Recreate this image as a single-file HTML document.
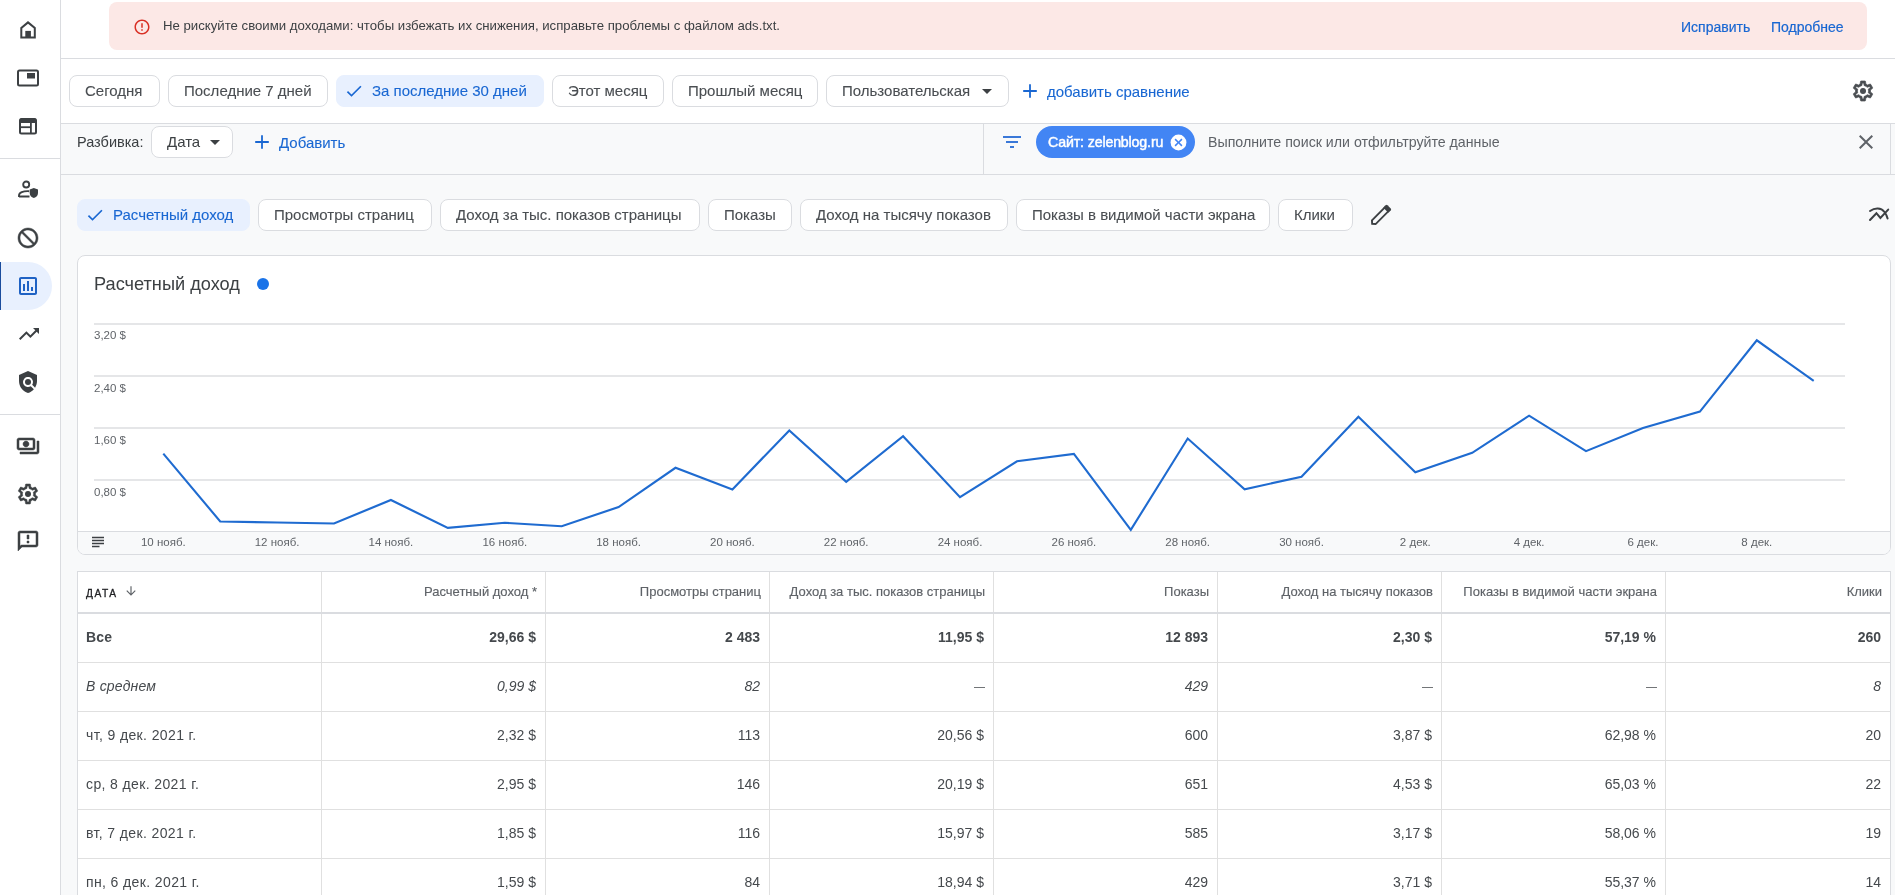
<!DOCTYPE html>
<html><head><meta charset="utf-8">
<style>
*{box-sizing:border-box;margin:0;padding:0}
html,body{width:1895px;height:895px;overflow:hidden;background:#f8f9fa;-webkit-font-smoothing:antialiased;font-family:"Liberation Sans",sans-serif;color:#3c4043}
.a{position:absolute}
.t{position:absolute;white-space:nowrap;height:20px;line-height:20px}
svg{position:absolute;display:block;overflow:visible}
.chip{position:absolute;height:32px;border:1px solid #dadce0;border-radius:8px;background:#fff}
.ct{position:absolute;white-space:nowrap;font-size:15px;color:#4a4e52;height:20px;line-height:20px;-webkit-text-stroke:0.1px currentColor}
.sel{background:#e8f0fe;border-color:#e8f0fe}
.blue{color:#1967d2}
.ic path{fill:#3c4043}
.th{position:absolute;white-space:nowrap;font-size:13px;color:#5f6368;height:20px;line-height:20px;-webkit-text-stroke:0.15px currentColor}
.td{position:absolute;white-space:nowrap;font-size:14px;color:#45494d;height:20px;line-height:20px}
.r{text-align:right}
</style></head><body><div id="root" style="position:absolute;left:0;top:0;width:1895px;height:895px;overflow:hidden;will-change:transform">
<!-- sidebar -->
<div class="a" style="left:0;top:0;width:61px;height:895px;background:#fff;border-right:1px solid #dadce0"></div>
<div class="a" style="left:0;top:158px;width:60px;height:1px;background:#dadce0"></div>
<div class="a" style="left:0;top:414px;width:60px;height:1px;background:#dadce0"></div>
<div class="a" style="left:0;top:262px;width:52px;height:48px;background:#e8f0fe;border-radius:0 24px 24px 0"></div>
<div class="a" style="left:0;top:262px;width:1px;height:48px;background:#1a4c9e"></div>

<!-- home -->
<svg style="left:16px;top:18px" width="24" height="24" viewBox="0 0 24 24"><path d="M12 4.4 L18.8 9.9 V19.6 H5.3 V9.9 Z" fill="none" stroke="#3c4043" stroke-width="2" stroke-linejoin="miter"/><rect x="9.3" y="12.9" width="5.6" height="7" fill="#3c4043"/></svg>
<!-- ads -->
<svg style="left:16px;top:66px" width="24" height="24" viewBox="0 0 24 24"><rect x="2" y="4.5" width="20" height="15" rx="1.5" fill="none" stroke="#3c4043" stroke-width="2"/><rect x="11" y="7" width="8" height="5.5" fill="#3c4043"/></svg>
<!-- sites -->
<svg style="left:16px;top:114px" width="24" height="24" viewBox="0 0 24 24"><rect x="4" y="5" width="16" height="14.5" rx="1.5" fill="none" stroke="#3c4043" stroke-width="2"/><rect x="4" y="4.5" width="16" height="4.5" rx="1" fill="#3c4043"/><rect x="4" y="12.3" width="11" height="1.8" fill="#3c4043"/><rect x="14" y="9" width="1.8" height="10" fill="#3c4043"/></svg>
<!-- person shield -->
<svg style="left:16px;top:178px" width="24" height="24" viewBox="0 0 24 24"><circle cx="10.2" cy="6.5" r="3" fill="none" stroke="#3c4043" stroke-width="1.9"/><path d="M3 19 V17.6 C3 14.5 7 12.9 13.2 13.2" fill="none" stroke="#3c4043" stroke-width="1.9"/><path d="M3 18.5 H13.5" stroke="#3c4043" stroke-width="2"/><path d="M17.8 10 L22 11.6 V15 C22 17.5 20.3 19.4 17.8 20 C15.3 19.4 13.7 17.5 13.7 15 V11.6 Z" fill="#3c4043"/></svg>
<!-- block -->
<svg style="left:16px;top:226px" width="24" height="24" viewBox="0 0 24 24"><path transform="translate(24,0) scale(-1,1)" fill="#3c4043" stroke="#3c4043" stroke-width="0.5" d="M12 2C6.48 2 2 6.48 2 12s4.48 10 10 10 10-4.48 10-10S17.52 2 12 2zM4 12c0-4.42 3.58-8 8-8 1.85 0 3.55.63 4.9 1.69L5.69 16.9C4.63 15.55 4 13.85 4 12zm8 8c-1.85 0-3.55-.63-4.9-1.69L18.31 7.1C19.37 8.45 20 10.15 20 12c0 4.42-3.58 8-8 8z"/></svg>
<!-- report -->
<svg style="left:16px;top:274px" width="24" height="24" viewBox="0 0 24 24"><path fill="#1f62c4" d="M9 17H7v-7h2v7zm4 0h-2V7h2v10zm4 0h-2v-4h2v4zm2 2H5V5h14v14.1V19zm0-16H5c-1.1 0-2 .9-2 2v14c0 1.1.9 2 2 2h14c1.1 0 2-.9 2-2V5c0-1.1-.9-2-2-2z"/></svg>
<!-- trending -->
<svg style="left:16.5px;top:322px" width="24" height="24" viewBox="0 0 24 24"><path fill="#3c4043" d="M16 6l2.29 2.29-4.88 4.88-4-4L2 16.59 3.41 18l6-6 4 4 6.3-6.29L22 12V6z"/></svg>
<!-- policy -->
<svg style="left:16px;top:370px" width="24" height="24" viewBox="0 0 24 24"><path fill="#3c4043" d="M21 5l-9-4-9 4v6c0 5.55 3.84 10.74 9 12 2.3-.56 4.33-1.9 5.88-3.71l-3.12-3.12c-1.94 1.29-4.58 1.07-6.29-.64-1.95-1.95-1.95-5.120 0-7.07 1.95-1.95 5.12-1.95 7.07 0 1.71 1.71 1.92 4.35.64 6.29l2.9 2.9C20.29 15.69 21 13.38 21 11V5z"/><circle cx="12" cy="12" r="3" fill="#3c4043"/></svg>
<!-- payments -->
<svg style="left:16px;top:434px" width="24" height="24" viewBox="0 0 24 24"><path fill="#3c4043" stroke="#3c4043" stroke-width="0.5" d="M19 14V6c0-1.1-.9-2-2-2H3c-1.1 0-2 .9-2 2v8c0 1.1.9 2 2 2h14c1.1 0 2-.9 2-2zm-2 0H3V6h14v8zm-7-7c-1.66 0-3 1.34-3 3s1.34 3 3 3 3-1.34 3-3-1.34-3-3-3zm13 0v11c0 1.1-.9 2-2 2H4v-2h17V7h2z"/></svg>
<!-- settings -->
<svg style="left:16px;top:482px" width="24" height="24" viewBox="0 0 24 24"><path fill="#3c4043" stroke="#3c4043" stroke-width="0.5" d="M19.43 12.98c.04-.32.07-.64.07-.98 0-.34-.03-.66-.07-.98l2.11-1.650c.19-.15.24-.42.12-.64l-2-3.46c-.09-.16-.26-.25-.44-.25-.06 0-.12.01-.17.03l-2.49 1c-.52-.4-1.08-.73-1.69-.98l-.38-2.65C14.46 2.18 14.25 2 14 2h-4c-.25 0-.46.18-.49.42l-.38 2.65c-.61.25-1.17.59-1.69.98l-2.49-1c-.06-.02-.12-.03-.18-.03-.17 0-.34.09-.43.25l-2 3.46c-.13.22-.07.49.12.64l2.11 1.65c-.04.32-.07.65-.07.98 0 .33.03.66.07.98l-2.11 1.65c-.19.15-.24.42-.12.64l2 3.46c.09.16.26.25.44.25.06 0 .12-.01.17-.03l2.49-1c.52.4 1.080.73 1.69.98l.38 2.65c.03.24.24.42.49.42h4c.25 0 .46-.18.49-.42l.38-2.65c.61-.25 1.17-.59 1.69-.98l2.49 1c.06.02.12.03.18.03.17 0 .34-.09.43-.25l2-3.46c.12-.22.07-.49-.12-.64l-2.11-1.65zm-1.98-1.71c.04.31.05.52.05.73 0 .21-.02.43-.05.73l-.14 1.13.89.7 1.08.84-.7 1.21-1.27-.51-1.04-.42-.9.68c-.43.32-.84.56-1.25.73l-1.06.43-.16 1.13-.2 1.35h-1.4l-.19-1.35-.16-1.13-1.06-.43c-.43-.18-.83-.41-1.23-.71l-.91-.7-1.06.43-1.27.51-.7-1.21 1.08-.84.89-.7-.14-1.13c-.03-.31-.05-.54-.05-.74s.02-.43.05-.73l.14-1.13-.89-.7-1.08-.84.7-1.21 1.27.51 1.04.42.9-.68c.43-.32.84-.56 1.25-.73l1.06-.43.16-1.13.2-1.35h1.39l.19 1.35.16 1.13 1.06.43c.43.18.83.41 1.23.71l.91.7 1.06-.43 1.27-.51.7 1.21-1.07.85-.89.7.14 1.13z"/><circle cx="12" cy="12" r="3" fill="#3c4043"/></svg>
<!-- feedback -->
<svg style="left:16px;top:529px" width="24" height="24" viewBox="0 0 24 24"><path fill="#3c4043" stroke="#3c4043" stroke-width="0.5" d="M20 2H4c-1.1 0-1.99.9-1.99 2L2 22l4-4h14c1.1 0 2-.9 2-2V4c0-1.1-.9-2-2-2zm0 14H5.17l-.59.59-.58.58V4h16v12zm-9-4h2v2h-2zm0-6h2v4h-2z"/></svg>

<!-- top white area -->
<div class="a" style="left:61px;top:0;width:1834px;height:123px;background:#fff"></div>
<div class="a" style="left:61px;top:58px;width:1834px;height:1px;background:#dadce0"></div>
<div class="a" style="left:61px;top:123px;width:1834px;height:1px;background:#dadce0"></div>
<div class="a" style="left:61px;top:174px;width:1834px;height:1px;background:#dadce0"></div>

<!-- banner -->
<div class="a" style="left:109px;top:2px;width:1758px;height:48px;background:#fce8e6;border-radius:8px"></div>
<svg style="left:133px;top:18px" width="18" height="18" viewBox="0 0 24 24"><path fill="#d93025" d="M11 15h2v2h-2zm0-8h2v6h-2zm.99-5C6.47 2 2 6.48 2 12s4.47 10 10 10 10-4.48 10-10S17.52 2 11.99 2zM12 20c-4.42 0-8-3.58-8-8s3.58-8 8-8 8 3.58 8 8-3.58 8-8 8z"/></svg>
<div class="t" style="left:163px;top:16px;font-size:13.2px;color:#3c4043">Не рискуйте своими доходами: чтобы избежать их снижения, исправьте проблемы с файлом ads.txt.</div>
<div class="t blue" style="left:1681px;top:17px;font-size:14px;-webkit-text-stroke:0.2px #1967d2">Исправить</div>
<div class="t blue" style="left:1771px;top:17px;font-size:14px;-webkit-text-stroke:0.2px #1967d2">Подробнее</div>

<!-- date chips -->
<div class="chip" style="left:69px;top:75px;width:91px"></div>
<div class="ct" style="left:85px;top:80.5px">Сегодня</div>
<div class="chip" style="left:168px;top:75px;width:160px"></div>
<div class="ct" style="left:184px;top:80.5px">Последние 7 дней</div>
<div class="chip sel" style="left:336px;top:75px;width:208px"></div>
<svg style="left:344px;top:81px" width="20" height="20" viewBox="0 0 24 24"><path fill="#1967d2" d="M9 16.17L4.83 12l-1.42 1.41L9 19 21 7l-1.41-1.41z"/></svg>
<div class="ct blue" style="left:372px;top:80.5px">За последние 30 дней</div>
<div class="chip" style="left:552px;top:75px;width:112px"></div>
<div class="ct" style="left:568px;top:80.5px">Этот месяц</div>
<div class="chip" style="left:672px;top:75px;width:146px"></div>
<div class="ct" style="left:688px;top:80.5px">Прошлый месяц</div>
<div class="chip" style="left:826px;top:75px;width:183px"></div>
<div class="ct" style="left:842px;top:80.5px">Пользовательская</div>
<svg style="left:975px;top:79px" width="24" height="24" viewBox="0 0 24 24"><path fill="#3c4043" d="M7 10l5 5 5-5z"/></svg>
<svg style="left:1018px;top:79px" width="24" height="24" viewBox="0 0 24 24"><path d="M12 5.2V18.8M5.2 12H18.8" stroke="#1967d2" stroke-width="1.8" fill="none"/></svg>
<div class="ct blue" style="left:1047px;top:81.5px">добавить сравнение</div>
<svg style="left:1851px;top:79px" width="24" height="24" viewBox="0 0 24 24"><path fill="#4a4e52" stroke="#4a4e52" stroke-width="0.7" d="M19.43 12.98c.04-.32.07-.64.07-.98 0-.34-.03-.66-.07-.98l2.11-1.650c.19-.15.24-.42.12-.64l-2-3.46c-.09-.16-.26-.25-.44-.25-.06 0-.12.01-.17.03l-2.49 1c-.52-.4-1.08-.73-1.69-.98l-.38-2.65C14.46 2.18 14.25 2 14 2h-4c-.25 0-.46.18-.49.42l-.38 2.65c-.61.25-1.17.59-1.69.98l-2.49-1c-.06-.02-.12-.03-.18-.03-.17 0-.34.09-.43.25l-2 3.46c-.13.22-.07.49.12.64l2.11 1.65c-.04.32-.07.65-.07.98 0 .33.03.66.07.98l-2.11 1.65c-.19.15-.24.42-.12.64l2 3.46c.09.16.26.25.44.25.06 0 .12-.01.17-.03l2.49-1c.52.4 1.080.73 1.69.98l.38 2.65c.03.24.24.42.49.42h4c.25 0 .46-.18.49-.42l.38-2.65c.61-.25 1.17-.59 1.690-.98l2.49 1c.06.02.12.03.18.03.17 0 .34-.09.43-.25l2-3.46c.12-.22.07-.49-.12-.64l-2.11-1.65zm-1.98-1.71c.04.31.05.52.05.73 0 .21-.02.43-.05.73l-.14 1.13.89.7 1.08.84-.7 1.21-1.27-.51-1.04-.42-.9.68c-.43.32-.84.56-1.25.73l-1.06.43-.16 1.13-.2 1.35h-1.4l-.19-1.35-.16-1.13-1.06-.43c-.43-.18-.83-.41-1.23-.71l-.91-.7-1.06.43-1.27.51-.7-1.21 1.08-.84.89-.7-.14-1.13c-.03-.31-.05-.54-.05-.74s.02-.43.05-.73l.14-1.13-.89-.7-1.08-.84.7-1.21 1.27.51 1.04.42.9-.68c.43-.32.84-.56 1.25-.73l1.06-.43.16-1.13.2-1.35h1.39l.19 1.350.16 1.13 1.06.43c.43.18.83.41 1.23.71l.91.7 1.06-.43 1.27-.51.7 1.21-1.07.85-.89.7.14 1.13z"/><circle cx="12" cy="12" r="3" fill="#4a4e52"/></svg>

<!-- filter row -->
<div class="t" style="left:77px;top:132px;font-size:14.5px;color:#3c4043">Разбивка:</div>
<div class="chip" style="left:151px;top:126px;width:82px"></div>
<div class="t" style="left:167px;top:132px;font-size:15px;color:#3c4043">Дата</div>
<svg style="left:203px;top:130px" width="24" height="24" viewBox="0 0 24 24"><path fill="#3c4043" d="M7 10l5 5 5-5z"/></svg>
<svg style="left:250px;top:130px" width="24" height="24" viewBox="0 0 24 24"><path d="M12 5.2V18.8M5.2 12H18.8" stroke="#1967d2" stroke-width="1.8" fill="none"/></svg>
<div class="ct blue" style="left:279px;top:132.5px">Добавить</div>
<div class="a" style="left:983px;top:123px;width:1px;height:51px;background:#dadce0"></div>
<div class="a" style="left:1890px;top:123px;width:1px;height:51px;background:#dadce0"></div>
<svg style="left:1000px;top:130px" width="24" height="24" viewBox="0 0 24 24"><path fill="#3a78d8" d="M10 18h4v-2h-4v2zM3 6v2h18V6H3zm3 7h12v-2H6v2z"/></svg>
<div class="a" style="left:1036px;top:126px;width:159px;height:32px;border-radius:16px;background:#4285f4"></div>
<div class="t" style="left:1048px;top:132px;font-size:14.2px;letter-spacing:-0.15px;color:#fff;-webkit-text-stroke:0.45px #fff">Сайт: zelenblog.ru</div>
<svg style="left:1169px;top:133px" width="19" height="19" viewBox="0 0 24 24"><circle cx="12" cy="12" r="10" fill="#fff"/><path fill="#4285f4" d="M17 15.59L15.59 17 12 13.41 8.41 17 7 15.59 10.59 12 7 8.41 8.41 7 12 10.59 15.59 7 17 8.41 13.41 12z"/></svg>
<div class="t" style="left:1208px;top:132px;font-size:14.2px;color:#5f6368">Выполните поиск или отфильтруйте данные</div>
<svg style="left:1854px;top:130px" width="24" height="24" viewBox="0 0 24 24"><path fill="#5f6368" d="M19 6.41L17.59 5 12 10.59 6.41 5 5 6.41 10.59 12 5 17.59 6.41 19 12 13.41 17.59 19 19 17.59 13.41 12z"/></svg>

<!-- metric chips -->
<div class="chip sel" style="left:77px;top:199px;width:173px"></div>
<svg style="left:85px;top:205px" width="20" height="20" viewBox="0 0 24 24"><path fill="#1967d2" d="M9 16.17L4.83 12l-1.42 1.41L9 19 21 7l-1.41-1.41z"/></svg>
<div class="ct blue" style="left:113px;top:204.5px">Расчетный доход</div>
<div class="chip" style="left:258px;top:199px;width:174px"></div>
<div class="ct" style="left:274px;top:204.5px">Просмотры страниц</div>
<div class="chip" style="left:440px;top:199px;width:260px"></div>
<div class="ct" style="left:456px;top:204.5px">Доход за тыс. показов страницы</div>
<div class="chip" style="left:708px;top:199px;width:84px"></div>
<div class="ct" style="left:724px;top:204.5px">Показы</div>
<div class="chip" style="left:800px;top:199px;width:208px"></div>
<div class="ct" style="left:816px;top:204.5px">Доход на тысячу показов</div>
<div class="chip" style="left:1016px;top:199px;width:254px"></div>
<div class="ct" style="left:1032px;top:204.5px">Показы в видимой части экрана</div>
<div class="chip" style="left:1278px;top:199px;width:75px"></div>
<div class="ct" style="left:1294px;top:204.5px">Клики</div>
<svg style="left:1360px;top:195px" width="40" height="40" viewBox="0 0 40 40"><g transform="translate(20.5,20.5) rotate(-45)"><path d="M-9.5 -2.6 H9.5 V2.6 H-9.5 L-11.8 0 Z" fill="none" stroke="#3c4043" stroke-width="1.9" stroke-linejoin="miter"/><path d="M7.5 -3.5 H11 Q12.2 -3.5 12.2 -2.3 V2.3 Q12.2 3.5 11 3.5 H7.5 Z" fill="#3c4043"/></g></svg>
<svg style="left:1860px;top:200px" width="35" height="30" viewBox="0 0 35 30"><path d="M10 11 C15 7.5 21 7.5 24.5 12 C26 14 27 16 27.6 18.5" fill="none" stroke="#3c4043" stroke-width="2" stroke-linecap="round"/><path d="M10 20 L16.4 13.2 L20.4 18 L28.2 9.6" fill="none" stroke="#3c4043" stroke-width="2" stroke-linecap="round" stroke-linejoin="miter"/></svg>

<!-- chart card -->
<div class="a" style="left:77px;top:255px;width:1814px;height:300px;background:#fff;border:1px solid #dadce0;border-radius:8px;overflow:hidden">
  <div class="a" style="left:0;top:275px;width:1812px;height:23px;background:#f8f9fa;border-top:1px solid #dadce0"></div>
</div>
<div class="t" style="left:94px;top:274px;font-size:18.2px;color:#3c4043">Расчетный доход</div>
<div class="a" style="left:257px;top:278px;width:12px;height:12px;border-radius:6px;background:#1a73e8"></div>
<svg style="left:0;top:0" width="1895" height="895">
  <g stroke="#e5e6e8" stroke-width="2">
    <line x1="94" y1="324" x2="1845" y2="324"/>
    <line x1="94" y1="376" x2="1845" y2="376"/>
    <line x1="94" y1="428" x2="1845" y2="428"/>
    <line x1="94" y1="480" x2="1845" y2="480"/>
  </g>
  <polyline fill="none" stroke="#1f6bd0" stroke-width="2.1" stroke-linejoin="miter" points="163.3,453.6 220.2,521.5 277.1,522.5 334.0,523.5 390.9,500.0 447.8,527.9 504.8,522.8 561.7,526.2 618.6,507.1 675.5,467.8 732.4,489.4 789.3,430.4 846.2,481.8 903.1,436.3 960.0,497.1 1017.0,461.3 1073.9,453.9 1130.8,529.9 1187.7,438.5 1244.6,489.3 1301.5,476.7 1358.4,416.7 1415.3,472.3 1472.2,452.8 1529.1,415.7 1586.0,451.1 1643.0,428.1 1699.9,411.6 1756.8,340.3 1813.7,380.9"/>
</svg>
<div class="t" style="left:94px;top:325px;font-size:11.5px;color:#5f6368">3,20 $</div>
<div class="t" style="left:94px;top:378px;font-size:11.5px;color:#5f6368">2,40 $</div>
<div class="t" style="left:94px;top:430px;font-size:11.5px;color:#5f6368">1,60 $</div>
<div class="t" style="left:94px;top:482px;font-size:11.5px;color:#5f6368">0,80 $</div>
<svg style="left:89px;top:533px" width="18" height="18" viewBox="0 0 24 24"><path fill="#3c4043" d="M14 17H4v2h10v-2zm6-8H4v2h16V9zM4 15h16v-2H4v2zM4 5v2h16V5H4z"/></svg>
<!--XL--><div class="t" style="left:103.3px;width:120px;text-align:center;top:532px;font-size:11.5px;color:#5f6368">10 нояб.</div><div class="t" style="left:217.1px;width:120px;text-align:center;top:532px;font-size:11.5px;color:#5f6368">12 нояб.</div><div class="t" style="left:330.9px;width:120px;text-align:center;top:532px;font-size:11.5px;color:#5f6368">14 нояб.</div><div class="t" style="left:444.8px;width:120px;text-align:center;top:532px;font-size:11.5px;color:#5f6368">16 нояб.</div><div class="t" style="left:558.6px;width:120px;text-align:center;top:532px;font-size:11.5px;color:#5f6368">18 нояб.</div><div class="t" style="left:672.4px;width:120px;text-align:center;top:532px;font-size:11.5px;color:#5f6368">20 нояб.</div><div class="t" style="left:786.2px;width:120px;text-align:center;top:532px;font-size:11.5px;color:#5f6368">22 нояб.</div><div class="t" style="left:900.0px;width:120px;text-align:center;top:532px;font-size:11.5px;color:#5f6368">24 нояб.</div><div class="t" style="left:1013.9px;width:120px;text-align:center;top:532px;font-size:11.5px;color:#5f6368">26 нояб.</div><div class="t" style="left:1127.7px;width:120px;text-align:center;top:532px;font-size:11.5px;color:#5f6368">28 нояб.</div><div class="t" style="left:1241.5px;width:120px;text-align:center;top:532px;font-size:11.5px;color:#5f6368">30 нояб.</div><div class="t" style="left:1355.3px;width:120px;text-align:center;top:532px;font-size:11.5px;color:#5f6368">2 дек.</div><div class="t" style="left:1469.1px;width:120px;text-align:center;top:532px;font-size:11.5px;color:#5f6368">4 дек.</div><div class="t" style="left:1583.0px;width:120px;text-align:center;top:532px;font-size:11.5px;color:#5f6368">6 дек.</div><div class="t" style="left:1696.8px;width:120px;text-align:center;top:532px;font-size:11.5px;color:#5f6368">8 дек.</div><!--/XL-->

<!-- table -->
<div class="a" style="left:77px;top:571px;width:1814px;height:340px;background:#fff;border:1px solid #dadce0"></div>
<!--TBL--><div class="a" style="left:321px;top:572px;width:1px;height:323px;background:#e0e0e0"></div>
<div class="a" style="left:545px;top:572px;width:1px;height:323px;background:#e0e0e0"></div>
<div class="a" style="left:769px;top:572px;width:1px;height:323px;background:#e0e0e0"></div>
<div class="a" style="left:993px;top:572px;width:1px;height:323px;background:#e0e0e0"></div>
<div class="a" style="left:1217px;top:572px;width:1px;height:323px;background:#e0e0e0"></div>
<div class="a" style="left:1441px;top:572px;width:1px;height:323px;background:#e0e0e0"></div>
<div class="a" style="left:1665px;top:572px;width:1px;height:323px;background:#e0e0e0"></div>
<div class="a" style="left:78px;top:612px;width:1812px;height:2px;background:#dadce0"></div>
<div class="a" style="left:78px;top:662px;width:1812px;height:1px;background:#e0e0e0"></div>
<div class="a" style="left:78px;top:711px;width:1812px;height:1px;background:#e0e0e0"></div>
<div class="a" style="left:78px;top:760px;width:1812px;height:1px;background:#e0e0e0"></div>
<div class="a" style="left:78px;top:809px;width:1812px;height:1px;background:#e0e0e0"></div>
<div class="a" style="left:78px;top:858px;width:1812px;height:1px;background:#e0e0e0"></div>
<div class="th" style="left:86px;top:584px;font-size:10.2px;letter-spacing:1.5px;-webkit-text-stroke:0.3px #202124;color:#202124">ДАТА</div>
<svg style="left:124px;top:584px" width="14" height="14" viewBox="0 0 24 24"><path fill="#5f6368" d="M20 12l-1.41-1.41L13 16.17V4h-2v12.17l-5.58-5.59L4 12l8 8 8-8z"/></svg>
<div class="th r" style="left:337px;width:200px;top:582px">Расчетный доход *</div>
<div class="th r" style="left:561px;width:200px;top:582px">Просмотры страниц</div>
<div class="th r" style="left:785px;width:200px;top:582px">Доход за тыс. показов страницы</div>
<div class="th r" style="left:1009px;width:200px;top:582px">Показы</div>
<div class="th r" style="left:1233px;width:200px;top:582px">Доход на тысячу показов</div>
<div class="th r" style="left:1457px;width:200px;top:582px">Показы в видимой части экрана</div>
<div class="th r" style="left:1682px;width:200px;top:582px">Клики</div>
<div class="td" style="left:86px;top:627px;letter-spacing:0.2px;font-weight:bold;">Все</div>
<div class="td r" style="left:336px;width:200px;top:627px;font-weight:bold;">29,66 $</div>
<div class="td r" style="left:560px;width:200px;top:627px;font-weight:bold;">2 483</div>
<div class="td r" style="left:784px;width:200px;top:627px;font-weight:bold;">11,95 $</div>
<div class="td r" style="left:1008px;width:200px;top:627px;font-weight:bold;">12 893</div>
<div class="td r" style="left:1232px;width:200px;top:627px;font-weight:bold;">2,30 $</div>
<div class="td r" style="left:1456px;width:200px;top:627px;font-weight:bold;">57,19 %</div>
<div class="td r" style="left:1681px;width:200px;top:627px;font-weight:bold;">260</div>
<div class="td" style="left:86px;top:676px;letter-spacing:0.2px;font-style:italic;">В среднем</div>
<div class="td r" style="left:336px;width:200px;top:676px;font-style:italic;">0,99 $</div>
<div class="td r" style="left:560px;width:200px;top:676px;font-style:italic;">82</div>
<div class="td r" style="left:784px;width:200px;top:676px;font-style:italic;"><span style="font-size:11px;font-style:normal;position:relative;top:-1.5px;left:1px">—</span></div>
<div class="td r" style="left:1008px;width:200px;top:676px;font-style:italic;">429</div>
<div class="td r" style="left:1232px;width:200px;top:676px;font-style:italic;"><span style="font-size:11px;font-style:normal;position:relative;top:-1.5px;left:1px">—</span></div>
<div class="td r" style="left:1456px;width:200px;top:676px;font-style:italic;"><span style="font-size:11px;font-style:normal;position:relative;top:-1.5px;left:1px">—</span></div>
<div class="td r" style="left:1681px;width:200px;top:676px;font-style:italic;">8</div>
<div class="td" style="left:86px;top:725px;letter-spacing:0.38px;">чт, 9 дек. 2021 г.</div>
<div class="td r" style="left:336px;width:200px;top:725px;">2,32 $</div>
<div class="td r" style="left:560px;width:200px;top:725px;">113</div>
<div class="td r" style="left:784px;width:200px;top:725px;">20,56 $</div>
<div class="td r" style="left:1008px;width:200px;top:725px;">600</div>
<div class="td r" style="left:1232px;width:200px;top:725px;">3,87 $</div>
<div class="td r" style="left:1456px;width:200px;top:725px;">62,98 %</div>
<div class="td r" style="left:1681px;width:200px;top:725px;">20</div>
<div class="td" style="left:86px;top:774px;letter-spacing:0.38px;">ср, 8 дек. 2021 г.</div>
<div class="td r" style="left:336px;width:200px;top:774px;">2,95 $</div>
<div class="td r" style="left:560px;width:200px;top:774px;">146</div>
<div class="td r" style="left:784px;width:200px;top:774px;">20,19 $</div>
<div class="td r" style="left:1008px;width:200px;top:774px;">651</div>
<div class="td r" style="left:1232px;width:200px;top:774px;">4,53 $</div>
<div class="td r" style="left:1456px;width:200px;top:774px;">65,03 %</div>
<div class="td r" style="left:1681px;width:200px;top:774px;">22</div>
<div class="td" style="left:86px;top:823px;letter-spacing:0.38px;">вт, 7 дек. 2021 г.</div>
<div class="td r" style="left:336px;width:200px;top:823px;">1,85 $</div>
<div class="td r" style="left:560px;width:200px;top:823px;">116</div>
<div class="td r" style="left:784px;width:200px;top:823px;">15,97 $</div>
<div class="td r" style="left:1008px;width:200px;top:823px;">585</div>
<div class="td r" style="left:1232px;width:200px;top:823px;">3,17 $</div>
<div class="td r" style="left:1456px;width:200px;top:823px;">58,06 %</div>
<div class="td r" style="left:1681px;width:200px;top:823px;">19</div>
<div class="td" style="left:86px;top:872px;letter-spacing:0.38px;">пн, 6 дек. 2021 г.</div>
<div class="td r" style="left:336px;width:200px;top:872px;">1,59 $</div>
<div class="td r" style="left:560px;width:200px;top:872px;">84</div>
<div class="td r" style="left:784px;width:200px;top:872px;">18,94 $</div>
<div class="td r" style="left:1008px;width:200px;top:872px;">429</div>
<div class="td r" style="left:1232px;width:200px;top:872px;">3,71 $</div>
<div class="td r" style="left:1456px;width:200px;top:872px;">55,37 %</div>
<div class="td r" style="left:1681px;width:200px;top:872px;">14</div><!--/TBL-->
</div></body></html>
